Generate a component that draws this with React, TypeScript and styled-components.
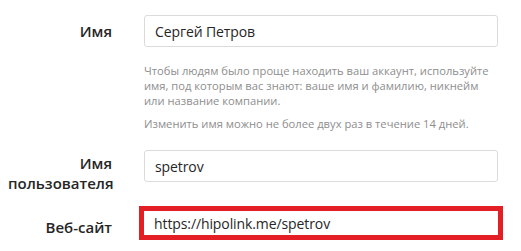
import React from 'react';
import styled, { createGlobalStyle } from 'styled-components';

const GlobalStyle = createGlobalStyle`
  html, body {
    margin: 0;
    padding: 0;
    background: #ffffff;
  }
  body {
    font-family: 'Open Sans', 'Noto Sans', sans-serif;
    color: #262626;
  }
`;

const Form = styled.div`
  display: flex;
  flex-direction: column;
  padding: 15px 0 0 8px;
`;

const Row = styled.div<{ $gap?: number }>`
  display: grid;
  grid-template-columns: 104px 354px;
  column-gap: 32px;
  align-items: start;
  margin-bottom: ${(p) => p.$gap ?? 0}px;
`;

const Label = styled.label<{ $top?: number }>`
  text-align: right;
  font-size: 15px;
  font-weight: 600;
  line-height: 20px;
  padding-top: ${(p) => p.$top ?? 5}px;
  color: #262626;
`;

const Field = styled.div`
  display: flex;
  flex-direction: column;
`;

const Input = styled.input`
  box-sizing: border-box;
  width: 100%;
  height: 32px;
  padding: 0 10px;
  border: 1px solid #dbdbdb;
  border-radius: 3px;
  background: #ffffff;
  font-family: inherit;
  font-size: 14px;
  letter-spacing: -0.1px;
  color: #262626;
  outline: none;
`;

const Highlight = styled.div`
  box-sizing: border-box;
  margin: -5px -5px 0;
  border: 5px solid #e31e25;
  height: 34px;
  display: flex;
  align-items: center;
  padding-left: 10px;
  font-size: 14px;
  letter-spacing: -0.1px;
  color: #262626;
`;

const Help = styled.p<{ $top?: number }>`
  margin: ${(p) => p.$top ?? 0}px 0 0;
  font-size: 11.2px;
  line-height: 15px;
  white-space: nowrap;
  color: #8e8e8e;
`;

export default function App() {
  return (
    <>
      <GlobalStyle />
      <Form>
        <Row $gap={19}>
          <Label $top={6}>Имя</Label>
          <Field>
            <Input defaultValue="Сергей Петров" />
            <Help $top={16}>
              Чтобы людям было проще находить ваш аккаунт, используйте
              <br />
              имя, под которым вас знают: ваше имя и фамилию, никнейм
              <br />
              или название компании.
            </Help>
            <Help $top={8}>Изменить имя можно не более двух раз в течение 14 дней.</Help>
          </Field>
        </Row>
        <Row $gap={18}>
          <Label $top={3}>Имя пользователя</Label>
          <Field>
            <Input defaultValue="spetrov" />
          </Field>
        </Row>
        <Row>
          <Label $top={6}>Веб-сайт</Label>
          <Field>
            <Highlight>https://hipolink.me/spetrov</Highlight>
          </Field>
        </Row>
      </Form>
    </>
  );
}
